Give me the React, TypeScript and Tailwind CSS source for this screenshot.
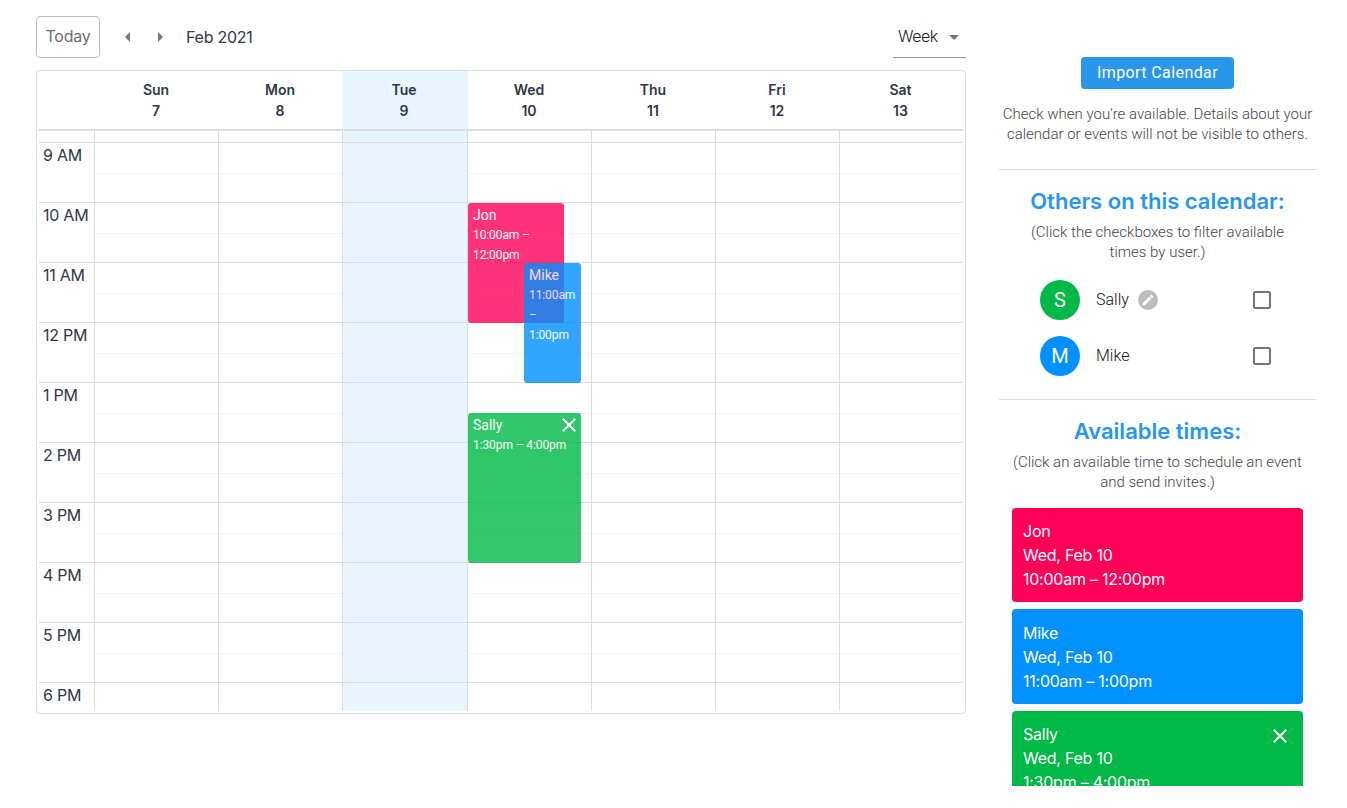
import React from "react";

const inter = "font-['Inter',sans-serif]";
const roboto = "font-['Roboto',sans-serif]";

const days = [
  { name: "Sun", date: 7 },
  { name: "Mon", date: 8 },
  { name: "Tue", date: 9, today: true },
  { name: "Wed", date: 10 },
  { name: "Thu", date: 11 },
  { name: "Fri", date: 12 },
  { name: "Sat", date: 13, last: true },
];

const hours = ["9 AM", "10 AM", "11 AM", "12 PM", "1 PM", "2 PM", "3 PM", "4 PM", "5 PM"];

const gridCols = "grid grid-cols-[56px_124px_124px_125px_124px_124px_124px_123px]";

/* ------------------ Icons ------------------ */
const CloseIcon = () => (
  <svg width="24" height="24" viewBox="0 0 24 24" fill="currentColor">
    <path d="M19 6.41L17.59 5 12 10.59 6.41 5 5 6.41 10.59 12 5 17.59 6.41 19 12 13.41 17.59 19 19 17.59 13.41 12z" />
  </svg>
);

const Arrow = ({ d }: { d: string }) => (
  <svg width="24" height="24" viewBox="0 0 24 24" fill="#757575">
    <path d={d} />
  </svg>
);

const PencilBadge = () => (
  <span className="ml-[9px] flex h-[20px] w-[20px] items-center justify-center rounded-full bg-[#bdbdbd] text-white">
    <svg width="14" height="14" viewBox="0 0 24 24" fill="currentColor">
      <path d="M3 17.25V21h3.75L17.81 9.94l-3.75-3.75L3 17.25zM20.71 7.04c.39-.39.39-1.02 0-1.41l-2.34-2.34c-.39-.39-1.02-.39-1.41 0l-1.83 1.83 3.75 3.75 1.83-1.83z" />
    </svg>
  </span>
);
/* ------------------------------------------- */

const DayColumn = ({ today, last, children }: { today?: boolean; last?: boolean; children?: React.ReactNode }) => (
  <div className={`relative h-[580px] ${today ? "bg-[#e7f5fe]" : ""} ${last ? "" : "border-r border-[#dcdcdc]"}`}>
    <div className="h-[12px] border-b border-[#dcdcdc]" />
    {hours.map((h) => (
      <div key={h} className="h-[60px] border-b border-[#dcdcdc]">
        <div className="h-[31px] border-b border-[#f3f4f5]" />
      </div>
    ))}
    <div className="h-[28px]" />
    {children}
  </div>
);

const EventBlock = ({ className, color, name, time, close }: { className: string; color: string; name: string; time: string; close?: boolean }) => (
  <div className={`absolute rounded-[3px] px-[5px] pt-[2px] text-white opacity-80 ${roboto} ${color} ${className}`}>
    <div className="text-[14px] leading-[20px]">{name}</div>
    <div className="text-[12px] leading-[20px] tracking-[-0.1px]">{time}</div>
    {close && (
      <span className="absolute right-0 top-0">
        <CloseIcon />
      </span>
    )}
  </div>
);

const Person = ({ letter, name, color, edit }: { letter: string; name: string; color: string; edit?: boolean }) => (
  <div className="flex h-[40px] items-center pl-[41px]">
    <div className={`flex h-[40px] w-[40px] items-center justify-center rounded-full text-[20px] text-white ${color}`}>
      {letter}
    </div>
    <span className="ml-[16px] text-[16px] font-light text-[#111]">{name}</span>
    {edit && <PencilBadge />}
    <span className="ml-auto mr-[45px] h-[18px] w-[18px] rounded-[2px] border-2 border-[#757575]" />
  </div>
);

const TimeCard = ({ color, name, time, close }: { color: string; name: string; time: string; close?: boolean }) => (
  <div className={`relative h-[94.4px] rounded-[4px] px-[11px] py-[11.2px] text-[16px] leading-[24px] tracking-[-0.25px] text-white ${inter} ${color}`}>
    <div>{name}</div>
    <div>Wed, Feb 10</div>
    <div>{time}</div>
    {close && (
      <span className="absolute right-[11px] top-[13px]">
        <CloseIcon />
      </span>
    )}
  </div>
);

export default function App() {
  return (
    <div className="flex h-[786px] overflow-hidden bg-white pl-[36px]">
      {/* Calendar */}
      <main className={`w-[930px] shrink-0 pt-[16px] text-[#2d3748] ${inter}`}>
        <div className="flex h-[42px] items-center">
          <button className="h-[42px] w-[64px] rounded-[4px] border border-[#bdbdbd] pb-[2px] text-[16px] tracking-[-0.25px] text-[#6e6e6e]">Today</button>
          <div className="ml-[16px] flex gap-[8px]">
            <Arrow d="M14 7l-5 5 5 5V7z" />
            <Arrow d="M10 17l5-5-5-5v10z" />
          </div>
          <span className="ml-[14px] text-[16px] tracking-[-0.25px]">Feb 2021</span>
          <div className="ml-auto flex h-[42px] w-[73px] items-center justify-between border-b border-[#949494] pl-[5px]">
            <span className="pb-[2px] text-[16px] font-light tracking-[-0.5px] text-[#222]">Week</span>
            <Arrow d="M7 10l5 5 5-5z" />
          </div>
        </div>

        <div className="mt-[12px] h-[644px] rounded-[4px] border border-[#dcdcdc] px-[2px]">
          <div className={`${gridCols} h-[60px] border-b-2 border-[#dcdcdc]`}>
            <div />
            {days.map((d) => (
              <div
                key={d.name}
                className={`pr-[2px] pt-[8px] text-center text-[14px] font-semibold leading-[21px] ${d.today ? "-ml-px bg-[#e7f5fe]" : ""}`}
              >
                <div>{d.name}</div>
                <div>{d.date}</div>
              </div>
            ))}
          </div>

          <div className={gridCols}>
            <div className="border-r border-[#dcdcdc] text-[16px] leading-[24px] tracking-[-0.25px]">
              <div className="h-[12px] border-b border-[#dcdcdc]" />
              {hours.map((h) => (
                <div key={h} className="-mr-px h-[60px] border-b border-[#dcdcdc] pl-[4px]">
                  {h}
                </div>
              ))}
              <div className="pl-[4px]">6 PM</div>
            </div>
            {days.map((d) => (
              <DayColumn key={d.name} today={d.today} last={d.last}>
                {d.name === "Wed" && (
                  <>
                    <EventBlock className="left-0 top-[72px] h-[120px] w-[96px]" color="bg-[#ff0059]" name="Jon" time="10:00am – 12:00pm" />
                    <EventBlock className="left-[56px] top-[132px] h-[120px] w-[57px]" color="bg-[#0090ff]" name="Mike" time="11:00am – 1:00pm" />
                    <EventBlock className="left-0 top-[282px] h-[150px] w-[113px]" color="bg-[#00b847]" name="Sally" time="1:30pm – 4:00pm" close />
                  </>
                )}
              </DayColumn>
            ))}
          </div>
        </div>
      </main>

      {/* Sidebar */}
      <aside className={`ml-[33px] w-[317px] shrink-0 pt-[57px] text-center ${roboto}`}>
        <button className="h-[32px] w-[153px] rounded-[4px] bg-[#2a96e9] text-[16px] tracking-[0.4px] text-white">Import Calendar</button>
        <p className="mt-[15px] text-[15px] font-light leading-[20px] text-[#444]">
          Check when you're available. Details about your
          <br />
          calendar or events will not be visible to others.
        </p>
        <div className="mt-[25px] border-t border-[#dcdcdc]" />

        <h2 className={`mt-[15px] text-[22px] font-semibold leading-[32px] text-[#2a96e9] ${inter}`}>Others on this calendar:</h2>
        <p className="mt-[5px] text-[15px] font-light leading-[20px] text-[#444]">
          (Click the checkboxes to filter available
          <br />
          times by user.)
        </p>
        <div className="mt-[18px] flex flex-col gap-[16px]">
          <Person letter="S" name="Sally" color="bg-[#00b847]" edit />
          <Person letter="M" name="Mike" color="bg-[#0090ff]" />
        </div>
        <div className="mt-[23px] border-t border-[#dcdcdc]" />

        <h2 className={`mt-[15px] text-[22px] font-semibold leading-[32px] text-[#2a96e9] ${inter}`}>Available times:</h2>
        <p className="mt-[5px] text-[15px] font-light leading-[20px] text-[#444]">
          (Click an available time to schedule an event
          <br />
          and send invites.)
        </p>
        <div className="mx-[13px] mt-[16px] flex flex-col gap-[7px] text-left">
          <TimeCard color="bg-[#ff0059]" name="Jon" time="10:00am – 12:00pm" />
          <TimeCard color="bg-[#0090ff]" name="Mike" time="11:00am – 1:00pm" />
          <TimeCard color="bg-[#00b847]" name="Sally" time="1:30pm – 4:00pm" close />
        </div>
      </aside>
    </div>
  );
}
